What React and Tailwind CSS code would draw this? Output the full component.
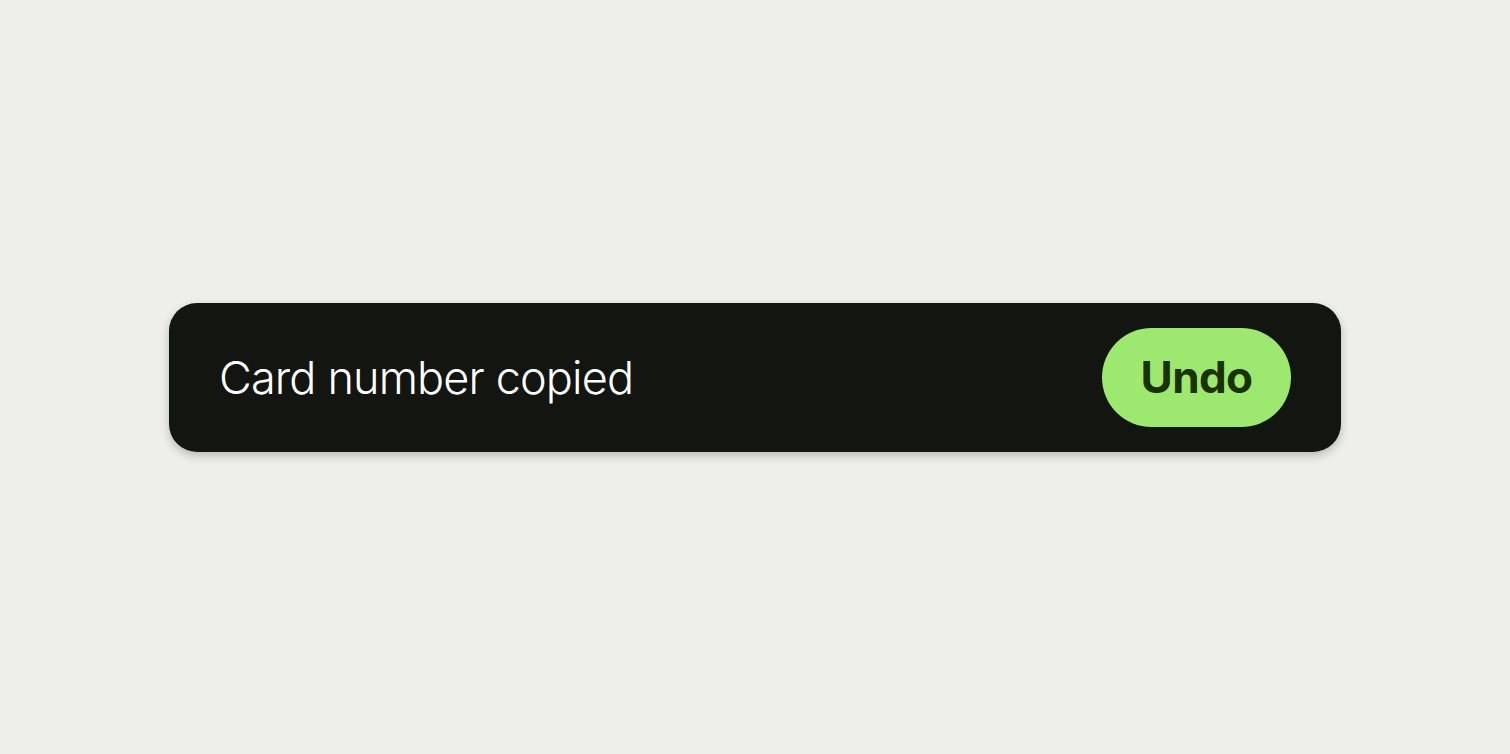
export default function App() {
  return (
    <div
      className="w-full h-screen bg-[#eeefea] flex items-center justify-center"
      style={{ fontFamily: "Inter, 'Noto Sans', sans-serif" }}
    >
      <div className="w-[1172px] h-[149px] bg-[#131511] rounded-[28px] flex items-center justify-between pl-[50px] pr-[50px] shadow-[0_4px_10px_rgba(0,0,0,0.22)]">
        <span className="text-[45px] leading-none text-white font-light tracking-[-0.85px]">Card number copied</span>
        <button className="h-[99px] w-[189px] rounded-full bg-[#9de86f] text-[#1a3100] text-[44px] font-bold leading-none tracking-[-0.6px] flex items-center justify-center">
          Undo
        </button>
      </div>
    </div>
  );
}
